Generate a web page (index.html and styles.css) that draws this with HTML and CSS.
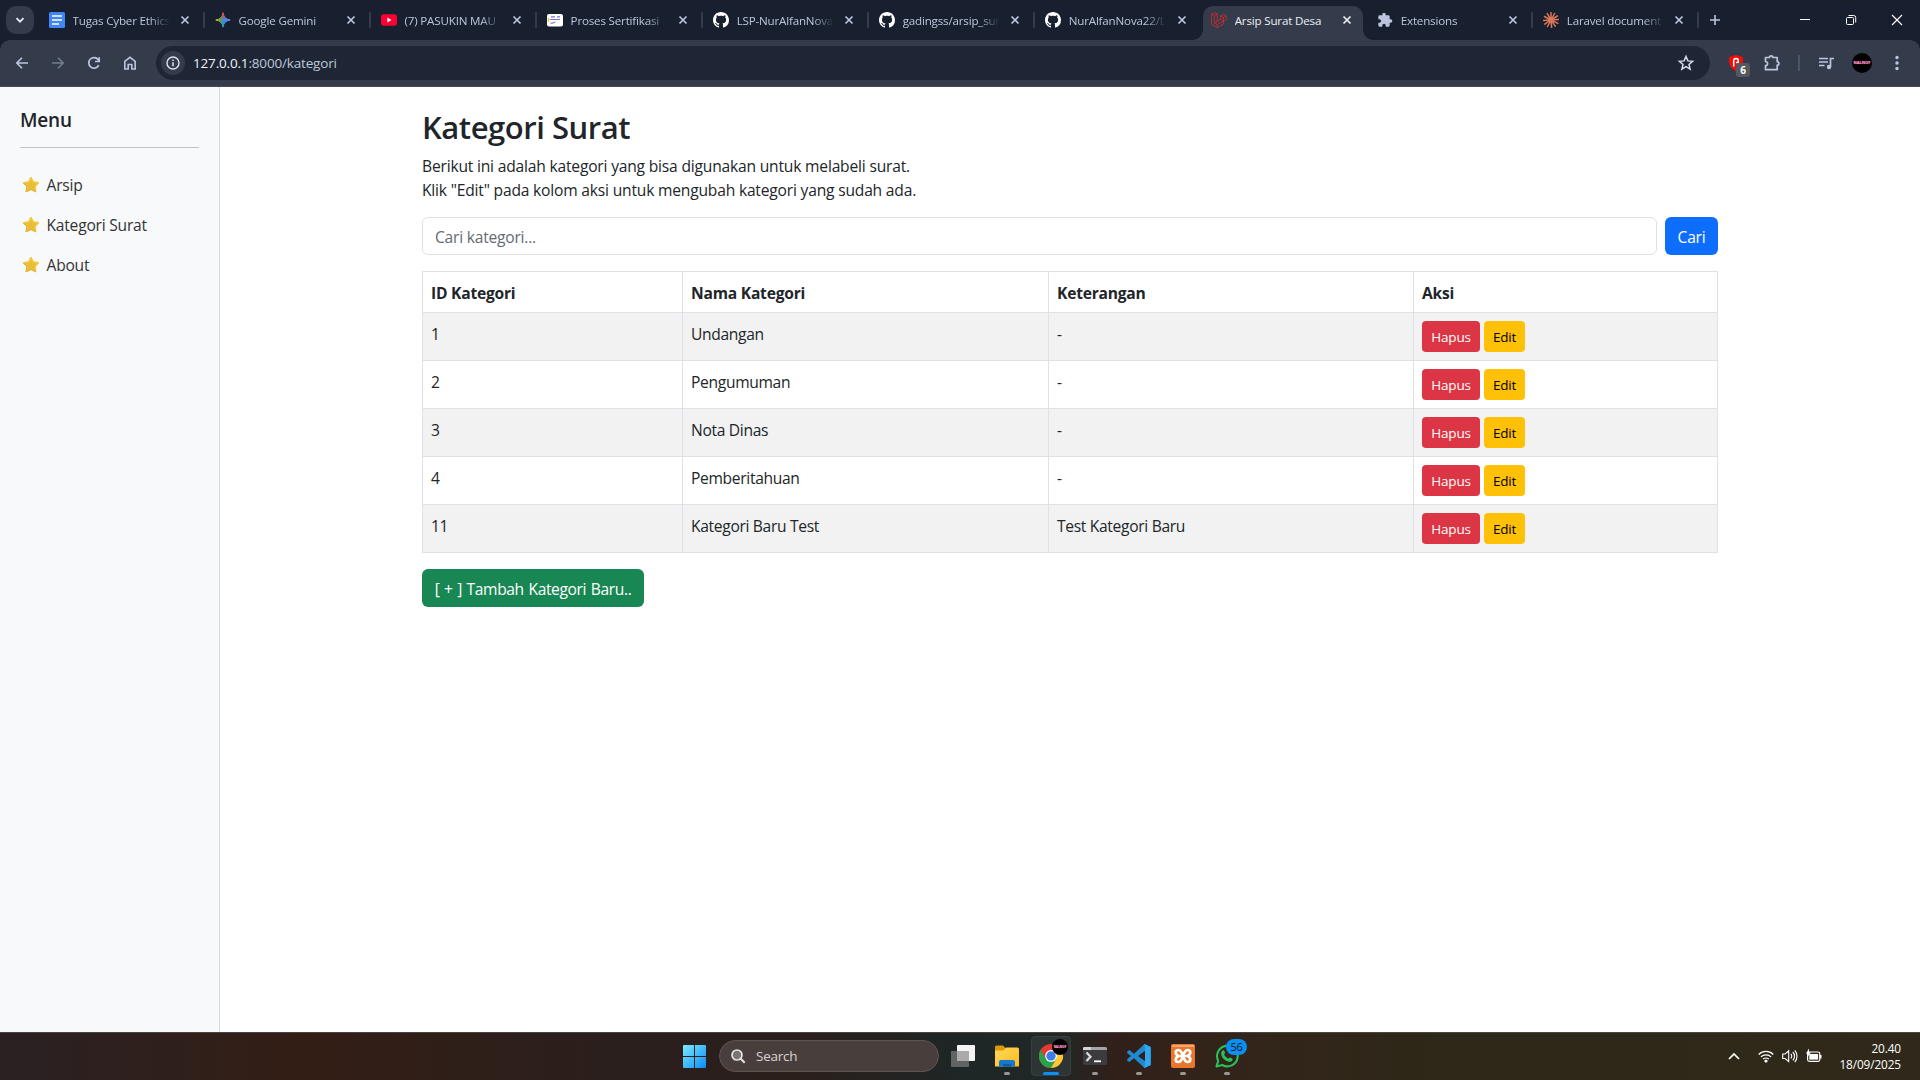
FILE: index.html
```html
<!DOCTYPE html>
<html lang="id">
<head>
<meta charset="utf-8">
<title>Arsip Surat Desa</title>
<link rel="stylesheet" href="styles.css">
</head>
<body>
<svg class="defs" aria-hidden="true">
  <defs>
    <symbol id="x" viewBox="0 0 16 16"><path d="M4.500 4.500l7 7M11.500 4.500l-7 7" fill="none" stroke="currentColor" stroke-width="1.700"/></symbol>
    <symbol id="github" viewBox="0 0 16 16"><path fill="#fff" d="M8 0C3.58 0 0 3.58 0 8c0 3.54 2.29 6.53 5.47 7.59.4.07.55-.17.55-.38 0-.19-.01-.82-.01-1.49-2.01.37-2.53-.49-2.69-.94-.09-.23-.48-.94-.82-1.13-.28-.15-.68-.52-.01-.53.63-.01 1.08.58 1.23.82.72 1.21 1.87.87 2.33.66.07-.52.28-.87.51-1.07-1.78-.2-3.64-.89-3.64-3.95 0-.87.31-1.59.82-2.15-.08-.2-.36-1.02.08-2.12 0 0 .67-.21 2.2.82.64-.18 1.32-.27 2-.27s1.36.09 2 .27c1.53-1.04 2.2-.82 2.2-.82.44 1.1.16 1.92.08 2.12.51.56.82 1.27.82 2.15 0 3.07-1.87 3.75-3.65 3.95.29.25.54.73.54 1.48 0 1.07-.01 1.93-.01 2.2 0 .21.15.46.55.38A8.01 8.01 0 0 0 16 8c0-4.42-3.58-8-8-8z"/></symbol>
    <symbol id="star" viewBox="0 0 18 18"><path d="M9 1.600l2.300 4.500 5 .8-3.500 3.600.8 5L9 13.300l-4.600 2.200.8-5L1.700 6.900l5-.8z" fill="#e9bd35" stroke="#f2c73f" stroke-width="1.600" stroke-linejoin="round"/><path d="M1.500 7l3.300 3.500-.9 5L9 13.300l4.800 2.500" fill="none" stroke="#c98f28" stroke-opacity=".55" stroke-width=".9" stroke-linejoin="round"/></symbol>
    <linearGradient id="win" x1="0" y1="0" x2="1" y2="1"><stop offset="0" stop-color="#7deaff"/><stop offset="1" stop-color="#0a8cf5"/></linearGradient>
    <linearGradient id="gem" x1="0" y1="0" x2="1" y2="0"><stop offset="0" stop-color="#f5b91c"/><stop offset=".32" stop-color="#4aa85a"/><stop offset=".6" stop-color="#3a86ee"/><stop offset="1" stop-color="#6a9cf5"/></linearGradient>
    <linearGradient id="gemtop" x1="0" y1="0" x2="0" y2="1"><stop offset="0" stop-color="#ee4335"/><stop offset=".5" stop-color="#ee4335" stop-opacity="0"/></linearGradient>
    <linearGradient id="fold" x1="0" y1="0" x2="1" y2="1"><stop offset="0" stop-color="#ffd95e"/><stop offset="1" stop-color="#fdbb1e"/></linearGradient>
  </defs>
</svg>

<header class="tabstrip">
  <button class="tab-search"><svg width="12" height="12" viewBox="0 0 12 12"><path d="M2.500 4.200L6 7.700l3.500-3.500" fill="none" stroke="#e3e7f2" stroke-width="1.900"/></svg></button>
  <div class="tab">
    <svg class="fav" viewBox="0 0 16 16"><rect width="16" height="16" rx="1.500" fill="#4285f4"/><path d="M3 4h10M3 8h10M3 12h7" stroke="#fff" stroke-width="1.600"/></svg>
    <span class="label">Tugas Cyber Ethics</span><svg class="close"><use href="#x"/></svg>
  </div>
  <div class="tab">
    <svg class="fav" viewBox="0 0 16 16"><path d="M8 .8C8.600 5 11 7.400 15.200 8 11 8.600 8.600 11 8 15.200 7.400 11 5 8.600.8 8 5 7.400 7.400 5 8 .8z" fill="url(#gem)" stroke="url(#gem)"/><path d="M8 .8C8.600 5 11 7.400 15.200 8 11 8.600 8.600 11 8 15.200 7.400 11 5 8.600.8 8 5 7.400 7.400 5 8 .8z" fill="url(#gemtop)" stroke="url(#gemtop)"/></svg>
    <span class="label">Google Gemini</span><svg class="close"><use href="#x"/></svg>
  </div>
  <div class="tab">
    <svg class="fav" viewBox="0 0 16 16"><rect y="2.300" width="16" height="11.400" rx="3" fill="#ff0033"/><path d="M6.300 5.600v4.800L10.500 8z" fill="#fff"/></svg>
    <span class="label">(7) PASUKIN MAU</span><svg class="close"><use href="#x"/></svg>
  </div>
  <div class="tab">
    <svg class="fav" viewBox="0 0 16 16"><rect y="2" width="16" height="12.500" rx="2" fill="#fff"/><path d="M3 7.500h10M4 4.800h4M10 4.800h3M3.500 11c2 1 3-1 5-1" stroke="#7f7abf" stroke-width="1.200" fill="none"/><path d="M1.500 6v4" stroke="#d8cf45" stroke-width="1.300"/></svg>
    <span class="label">Proses Sertifikasi</span><svg class="close"><use href="#x"/></svg>
  </div>
  <div class="tab"><svg class="fav"><use href="#github"/></svg><span class="label">LSP-NurAlfanNova</span><svg class="close"><use href="#x"/></svg></div>
  <div class="tab"><svg class="fav"><use href="#github"/></svg><span class="label">gadingss/arsip_sur</span><svg class="close"><use href="#x"/></svg></div>
  <div class="tab no-sep"><svg class="fav"><use href="#github"/></svg><span class="label">NurAlfanNova22/L</span><svg class="close"><use href="#x"/></svg></div>
  <div class="tab active">
    <svg class="fav" viewBox="0 0 16 16"><path d="M.6 2L3.400.5l2.800 1.500v7.200l3.400-2V4l2.900-1.600L15.400 4v3.300l-2.900 1.700v3L6.200 15.500.6 12.300zM.6 2l2.800 1.600L6.200 2M3.400 3.600v7.300l2.800 1.600 6.300-3.500M9.600 4l2.900 1.600L15.400 4M12.500 5.600V9L9.600 7.200M6.200 12.500v3M6.200 9.200l-2.800 1.700" fill="none" stroke="#c32d2d" stroke-width=".9" stroke-linejoin="round"/></svg>
    <span class="label">Arsip Surat Desa</span><svg class="close"><use href="#x"/></svg>
  </div>
  <div class="tab">
    <svg class="fav" viewBox="0 0 24 24"><path fill="#bcc5dd" d="M20.500 11H19V7a2 2 0 0 0-2-2h-4V3.500a2.500 2.500 0 0 0-5 0V5H4a2 2 0 0 0-2 2v3.800h1.500a2.700 2.700 0 0 1 0 5.400H2V20a2 2 0 0 0 2 2h3.800v-1.500a2.700 2.700 0 0 1 5.400 0V22H17a2 2 0 0 0 2-2v-4h1.500a2.500 2.500 0 0 0 0-5z"/></svg>
    <span class="label">Extensions</span><svg class="close"><use href="#x"/></svg>
  </div>
  <div class="tab">
    <svg class="fav" viewBox="0 0 16 16"><path d="M8 8V.6M8 8l3.600-6.500M8 8l6.300-4M8 8l7.500-.6M8 8l6.800 3.300M8 8l4.200 6.200M8 8l.6 7.500M8 8l-3.500 6.500M8 8l-6.300 4.200M8 8L.5 8.400M8 8L1.500 4.500M8 8L4.300 1.600" stroke="#d97757" stroke-width="1.500" stroke-linecap="round"/></svg>
    <span class="label">Laravel document</span><svg class="close"><use href="#x"/></svg>
  </div>
  <button class="new-tab"><svg width="12" height="12" viewBox="0 0 12 12"><path d="M6 1v10M1 6h10" stroke="#bcc5dd" stroke-width="1.600"/></svg></button>
  <div class="win-controls">
    <span><svg width="12" height="12" viewBox="0 0 12 12"><path d="M1 5.500h10" stroke="#fff"/></svg></span>
    <span><svg width="12" height="12" viewBox="0 0 12 12"><rect x="1.500" y="3.500" width="7" height="7" rx="1" fill="none" stroke="#fff"/><path d="M3.500 1.500h5.200a2 2 0 0 1 2 2v5" fill="none" stroke="#fff"/></svg></span>
    <span><svg width="12" height="12" viewBox="0 0 12 12"><path d="M1 1l10 10M11 1L1 11" stroke="#fff" stroke-width="1.100"/></svg></span>
  </div>
</header>

<nav class="toolbar">
  <span class="tool"><svg width="16" height="16" viewBox="0 0 16 16"><path d="M14 8H3M8 2.800L2.800 8 8 13.200" fill="none" stroke="#bcc5dd" stroke-width="1.600"/></svg></span>
  <span class="tool"><svg width="16" height="16" viewBox="0 0 16 16"><path d="M2 8h11M8 2.800L13.200 8 8 13.200" fill="none" stroke="#747c8f" stroke-width="1.600"/></svg></span>
  <span class="tool"><svg width="16" height="16" viewBox="0 0 16 16"><path d="M12.800 10.200A5.300 5.300 0 1 1 12.500 5L13 6" fill="none" stroke="#bcc5dd" stroke-width="1.700"/><path d="M13.200 2.200v4.300H9" fill="none" stroke="#bcc5dd" stroke-width="1.700"/></svg></span>
  <span class="tool"><svg width="16" height="16" viewBox="0 0 16 16"><path d="M2.800 14V6.300L8 2.300l5.200 4V14H9.800V9.500H6.200V14z" fill="none" stroke="#bcc5dd" stroke-width="1.600"/></svg></span>
  <div class="omnibox">
    <span class="site-info"><svg width="16" height="16" viewBox="0 0 16 16"><circle cx="8" cy="8" r="6" fill="none" stroke="#dde2f0" stroke-width="1.400"/><path d="M8 7.200v4M8 4.600v1.500" stroke="#dde2f0" stroke-width="1.500"/></svg></span>
    <span class="url"><b>127.0.0.1</b>:8000/kategori</span>
    <svg width="18" height="18" viewBox="0 0 18 18"><path d="M9 2.500l1.900 4.400 4.700.4-3.600 3.100 1.100 4.700L9 12.600l-4.100 2.500L6 10.400 2.400 7.300l4.700-.4z" fill="none" stroke="#d5dbea" stroke-width="1.500"/></svg>
  </div>
  <span class="tool shield"><svg width="16" height="18" viewBox="0 0 16 18"><path d="M8 1l7 2v5c0 4-3 7-7 9-4-2-7-5-7-9V3z" fill="#f20d0d"/><path d="M5.700 12.500V6.800a2.300 2.300 0 0 1 4.600 0v1.700H8" fill="none" stroke="#fff" stroke-width="1.500"/></svg><em>6</em></span>
  <span class="tool"><svg width="18" height="18" viewBox="0 0 18 18"><path d="M2.500 3.500h4a1.700 1.700 0 0 1 3.400 0h4.300v4.200a1.700 1.700 0 0 1 0 3.400v4.600H2.500v-4a2 2 0 0 0 0-4.200z" fill="none" stroke="#bcc5dd" stroke-width="1.700" stroke-linejoin="round"/></svg></span>
  <span class="divider"></span>
  <span class="tool"><svg width="18" height="18" viewBox="0 0 18 18"><path d="M2 4.500h9M2 8h9M2 11.500h5.500M13.500 13V4.500H17" fill="none" stroke="#bcc5dd" stroke-width="1.700"/><circle cx="12" cy="13" r="2.200" fill="#bcc5dd"/></svg></span>
  <span class="tool"><i class="avatar">NALNOF</i></span>
  <span class="tool last"><svg width="4" height="16" viewBox="0 0 4 16"><g fill="#bcc5dd"><circle cx="2" cy="2.500" r="1.700"/><circle cx="2" cy="8" r="1.700"/><circle cx="2" cy="13.500" r="1.700"/></g></svg></span>
</nav>

<div class="page">
  <aside class="sidebar">
    <h5>Menu</h5>
    <hr>
    <a><svg><use href="#star"/></svg>Arsip</a>
    <a><svg><use href="#star"/></svg>Kategori Surat</a>
    <a><svg><use href="#star"/></svg>About</a>
  </aside>
  <main>
    <div class="container">
      <h2>Kategori Surat</h2>
      <p>Berikut ini adalah kategori yang bisa digunakan untuk melabeli surat.<br>Klik "Edit" pada kolom aksi untuk mengubah kategori yang sudah ada.</p>
      <form class="search"><input type="text" placeholder="Cari kategori..."><button type="button" class="btn primary">Cari</button></form>
      <table>
        <colgroup><col class="c-id"><col class="c-name"><col class="c-note"><col></colgroup>
        <thead><tr><th>ID Kategori</th><th>Nama Kategori</th><th>Keterangan</th><th>Aksi</th></tr></thead>
        <tbody>
          <tr><td>1</td><td>Undangan</td><td>-</td><td><div class="actions"><button class="btn sm danger">Hapus</button><button class="btn sm warning">Edit</button></div></td></tr>
          <tr><td>2</td><td>Pengumuman</td><td>-</td><td><div class="actions"><button class="btn sm danger">Hapus</button><button class="btn sm warning">Edit</button></div></td></tr>
          <tr><td>3</td><td>Nota Dinas</td><td>-</td><td><div class="actions"><button class="btn sm danger">Hapus</button><button class="btn sm warning">Edit</button></div></td></tr>
          <tr><td>4</td><td>Pemberitahuan</td><td>-</td><td><div class="actions"><button class="btn sm danger">Hapus</button><button class="btn sm warning">Edit</button></div></td></tr>
          <tr><td>11</td><td>Kategori Baru Test</td><td>Test Kategori Baru</td><td><div class="actions"><button class="btn sm danger">Hapus</button><button class="btn sm warning">Edit</button></div></td></tr>
        </tbody>
      </table>
      <button class="btn success">[ + ] Tambah Kategori Baru..</button>
    </div>
  </main>
</div>

<footer class="taskbar">
  <div class="dock">
    <svg class="start" width="23" height="23" viewBox="0 0 23 23"><path d="M0 1a1 1 0 0 1 1-1h10v11H0zM12 0h10a1 1 0 0 1 1 1v10H12zM0 12h11v11H1a1 1 0 0 1-1-1zM12 12h11v10a1 1 0 0 1-1 1H12z" fill="url(#win)"/></svg>
    <div class="task-search"><svg width="16" height="16" viewBox="0 0 16 16"><circle cx="7" cy="7" r="5" fill="#7a7472" stroke="#e4e2e2" stroke-width="1.700"/><path d="M10.700 10.700l4 4" stroke="#e4e2e2" stroke-width="2"/></svg>Search</div>
    <span class="app"><svg viewBox="0 0 24 24"><rect x="6" y="1" width="18" height="16" rx="1" fill="#f4f4f4"/><rect x="0" y="7" width="18" height="16" rx="1" fill="#6f6f6f" fill-opacity=".85"/><rect x="6" y="7" width="12" height="10" fill="#aaa"/></svg></span>
    <span class="app run"><svg viewBox="0 0 24 24"><path d="M0 3a1.500 1.500 0 0 1 1.500-1.500H8L10.500 4v4H0z" fill="#dc9a0b"/><path d="M0 6.500h8.500L11 3.500h11.500A1.500 1.500 0 0 1 24 5v17.500H0z" fill="url(#fold)"/><path d="M4 22.500V18a2 2 0 0 1 2-2h12a2 2 0 0 1 2 2v4.500z" fill="#1779cc"/><path d="M8 22.500V20h8v2.500z" fill="#0a5cab"/></svg></span>
    <span class="app run current"><svg viewBox="0 0 24 24"><circle cx="12" cy="12" r="12" fill="#e33b2e"/><path d="M1.600 6A12 12 0 0 0 12 24l5.200-9L12 12 6.800 15z" fill="#28a34b"/><path d="M12 24A12 12 0 0 0 22.400 6H12l5.200 9z" fill="#fcc934"/><circle cx="12" cy="12" r="5.900" fill="#fff"/><circle cx="12" cy="12" r="4.700" fill="#3b7ded"/></svg><i class="avatar mini">NALNOF</i></span>
    <span class="app run"><svg viewBox="0 0 24 24"><rect y="3" width="24" height="18" rx="1.500" fill="#3c3c3e"/><path d="M0 6V4.500A1.500 1.500 0 0 1 1.500 3h21A1.500 1.500 0 0 1 24 4.500V6z" fill="#a5a5a5"/><path d="M0 6V4.500A1.500 1.500 0 0 1 1.500 3H8v3z" fill="#d5d5d5"/><path d="M3.500 8.500l4 4.300-4 4.300" fill="none" stroke="#ddd" stroke-width="2.200"/><path d="M11 17.300h7" stroke="#fff" stroke-width="1.800"/></svg></span>
    <span class="app run"><svg viewBox="0 0 24 24"><path d="M17.500 0L7 9.700 2.300 6.100.3 7.200v2L4 12 .3 15v2l2 1L7 14.300 17.500 24l6.200-2.900V2.900zM18 6.700v10.600L11 12z" fill="#2089d0"/><path d="M17.500 0l6.200 2.900v18.200L17.500 24l.5-6.700V6.700z" fill="#30a7f2"/></svg></span>
    <span class="app run"><svg viewBox="0 0 24 24"><rect width="24" height="24" rx="2" fill="#e9762b"/><path d="M1 1h22v2H1z" fill="#f3a777"/><path d="M7.500 12C3.500 10 4 6 7.500 6c3 0 3 3 4.500 6s1.500 6 4.500 6c3.500 0 4-4 0-6 4-2 3.500-6 0-6-3 0-3 3-4.500 6s-1.500 6-4.500 6C4 18 3.500 14 7.500 12zM8.500 12h7" fill="none" stroke="#fff" stroke-width="2.700" stroke-linejoin="round"/></svg></span>
    <span class="app run"><svg viewBox="0 0 24 24"><path d="M1.500 22.500l1.700-5.800A10.300 10.300 0 1 1 7.300 21z" fill="none" stroke="#27c15a" stroke-width="2.100" stroke-linejoin="round"/><path d="M7.500 6.600c.7-.7 1.400-.5 1.700.2l.8 1.900c.2.700-1 1.500-.8 2 .9 1.800 2.200 3 4 3.800.6.200 1.400-1.300 2-1l2 1c.6.3.5 1.200.1 1.900-.8 1.400-2.700 1.700-4.400 1.100-3.300-1.100-5.700-3.500-6.600-6.600-.4-1.700.1-3.300 1.200-4.300z" fill="#27c15a"/></svg><em class="count">56</em></span>
  </div>
  <div class="tray">
    <svg width="12" height="16" viewBox="0 0 12 16"><path d="M1 11l5-5 5 5" fill="none" stroke="#fff" stroke-width="1.700"/></svg>
    <svg class="wifi" width="16" height="16" viewBox="0 0 16 16"><g fill="none" stroke="#fff" stroke-width="1.200"><path d="M.7 6.500a10.300 10.300 0 0 1 14.600 0M2.900 8.900a7.200 7.200 0 0 1 10.200 0M5.100 11.200a4.100 4.100 0 0 1 5.800 0"/></g><circle cx="8" cy="13" r="1.600" fill="#fff"/></svg>
    <svg width="16" height="16" viewBox="0 0 16 16"><path d="M.7 6h2.500L6.700 2.800v10.800L3.200 10.500H.7zM8.800 6a3 3 0 0 1 0 4.400M10.800 4a6 6 0 0 1 0 8.400M12.800 2.300a9 9 0 0 1 0 11.800" fill="none" stroke="#fff" stroke-width="1.100"/></svg>
    <svg width="16" height="16" viewBox="0 0 16 16"><rect x="1.600" y="4" width="12.200" height="9.400" rx="1.800" fill="none" stroke="#fff" stroke-width="1.200"/><rect x="3.300" y="6" width="8.800" height="5.600" fill="#fff"/><path d="M14.500 7v3.500" stroke="#fff" stroke-width="2"/><path d="M3 .5L0 5.500h2L1.500 9 5 4.200H3z" fill="#fff"/></svg>
    <div class="clock">20.40<br>18/09/2025</div>
  </div>
</footer>
</body>
</html>
```
FILE: styles.css
```css
* { box-sizing: border-box; }

body {
  margin: 0;
  width: 1920px;
  height: 1080px;
  overflow: hidden;
  display: flex;
  flex-direction: column;
  font: 15.6px/24px "Open Sans", "Noto Sans", sans-serif;
  letter-spacing: -0.22px;
  color: #212529;
  background: #fff;
}

button, input { font: inherit; letter-spacing: inherit; border: 0; margin: 0; padding: 0; background: none; }
em, i { font-style: normal; }
svg { display: block; flex: none; }
.defs { position: absolute; width: 0; height: 0; }

/* Browser tabs */
.tabstrip {
  height: 40px;
  flex: none;
  display: flex;
  background: #18202f;
  color: #bcc5dd;
}
.tab-search {
  width: 28px;
  height: 28px;
  margin: 6px 6.500px 6px 6px;
  border-radius: 10px;
  background: #343c4c;
  display: flex;
  align-items: center;
  justify-content: center;
}
.tab {
  position: relative;
  width: 166.040px;
  flex: none;
  height: 40px;
  padding: 0 2px 0 8px;
  display: flex;
  align-items: center;
  font-size: 11.600px;
  line-height: 16px;
  letter-spacing: -0.18px;
}
.tab::after {
  content: "";
  width: 2px;
  height: 16px;
  margin-left: 10px;
  border-radius: 1px;
  background: #343c4c;
}
.tab.no-sep::after, .tab.active::after { display: none; }
.fav { width: 16px; height: 16px; margin-right: 8px; }
.label {
  width: 97px;
  margin-right: 8px;
  padding-top: 1px;
  overflow: hidden;
  white-space: nowrap;
  -webkit-mask-image: linear-gradient(90deg, #000 76px, transparent 97px);
  mask-image: linear-gradient(90deg, #000 76px, transparent 97px);
}
.close { width: 16px; height: 16px; }
.tab.active {
  width: 160px;
  height: 34px;
  margin: 6px 6.040px 0 0;
  padding-bottom: 6px;
  border-radius: 10px 10px 0 0;
  background: #343c4c;
  color: #eceef5;
}
.tab.active::before {
  content: "";
  position: absolute;
  left: -10px;
  right: -10px;
  bottom: 0;
  height: 10px;
  background:
    radial-gradient(circle at 0 0, transparent 9.500px, #343c4c 10px) left / 10px 10px no-repeat,
    radial-gradient(circle at 100% 0, transparent 9.500px, #343c4c 10px) right / 10px 10px no-repeat;
}
.tab.active .label {
  margin-right: 7px;
  -webkit-mask-image: none;
  mask-image: none;
}
.new-tab { width: 28px; display: flex; align-items: center; justify-content: center; }
.win-controls { margin-left: auto; display: flex; }
.win-controls span { width: 46px; display: flex; align-items: center; justify-content: center; }

/* Browser toolbar */
.toolbar {
  height: 47px;
  flex: none;
  display: flex;
  align-items: center;
  padding: 0 6px 1px 4px;
  border-bottom: 1px solid #4a4b52;
  background:
    radial-gradient(circle at 10px 10px, #343c4c 9.500px, #18202f 10px) left top / 10px 10px no-repeat,
    radial-gradient(circle at 0 10px, #343c4c 9.500px, #18202f 10px) right top / 10px 10px no-repeat,
    #343c4c;
}
.tool {
  position: relative;
  width: 36px;
  height: 36px;
  flex: none;
  display: flex;
  align-items: center;
  justify-content: center;
}
.tool.last { width: 34px; }
.omnibox {
  flex: 1;
  height: 34px;
  margin: 0 8px;
  padding: 0 15px 0 5px;
  display: flex;
  align-items: center;
  border-radius: 17px;
  background: #1e2636;
}
.site-info {
  width: 24px;
  height: 24px;
  margin-right: 8px;
  border-radius: 50%;
  background: #343c4c;
  display: flex;
  align-items: center;
  justify-content: center;
}
.url { flex: 1; font-size: 13.500px; letter-spacing: -0.17px; color: #bfc6d6; }
.url b { font-weight: 400; color: #f1f3f9; }
.shield em {
  position: absolute;
  left: 18px;
  top: 18px;
  width: 14px;
  height: 14px;
  border-radius: 3px;
  background: #55585c;
  color: #fff;
  font: 700 10px/14px "Open Sans", sans-serif;
  text-align: center;
}
.divider { width: 2px; height: 16px; margin: 0 8px; background: #4c5566; }
.avatar {
  width: 20px;
  height: 20px;
  border-radius: 50%;
  background: #000;
  color: #f7a6cc;
  font: 700 4px/20px "Open Sans", sans-serif;
  letter-spacing: 0;
  text-align: center;
  overflow: hidden;
  text-shadow: 0 0 1px #e0338a;
}

/* Page */
.page { height: 945px; flex: none; display: flex; }
.sidebar {
  width: 220px;
  padding: 20px;
  border-right: 1px solid #d5d8dc;
  background: #f8f9fa;
}
.sidebar h5 { margin: 0; padding-top: 3px; font-size: 19px; line-height: 21px; font-weight: 600; letter-spacing: -0.2px; }
.sidebar hr { margin: 16px 0; border: 0; border-top: 1px solid #bfc1c4; }
.sidebar a {
  display: flex;
  align-items: center;
  gap: 6.500px;
  padding: 9px 2px 7px;
  color: #333;
}
.sidebar a svg { width: 18px; height: 18px; margin-bottom: 1px; }
main { flex: 1; }
.container { width: 1320px; margin: 0 auto; padding: 20px 12px; }
h2 { margin: 0 0 7px; padding-top: 2px; font-size: 31px; line-height: 37.400px; font-weight: 600; letter-spacing: -0.45px; }
p { margin: 0 0 15px; padding-top: 1px; letter-spacing: -0.19px; }
.search { display: flex; gap: 8px; margin-bottom: 16px; }
.search input {
  flex: 1;
  height: 38px;
  padding: 1px 12px 0;
  border: 1px solid #dee2e6;
  border-radius: 6px;
}
.search input::placeholder { color: #646a70; opacity: 1; }
.btn {
  height: 38px;
  padding: 1px 0 0;
  border-radius: 6px;
  color: #fff;
  white-space: nowrap;
}
.btn.sm { height: 31px; padding: 0; font-size: 13.500px; border-radius: 4px; }
.primary { width: 53px; background: #0d6efd; }
.danger { width: 58px; background: #dc3545; }
.warning { width: 41px; background: #ffc107; color: #000; }
.success { width: 222px; background: #198754; letter-spacing: -0.38px; word-spacing: 1px; }
table {
  width: 100%;
  margin-bottom: 16px;
  border-collapse: collapse;
  table-layout: fixed;
}
.c-id { width: 260px; }
.c-name { width: 366px; }
.c-note { width: 365px; }
th, td {
  padding: 9px 8px 7px;
  border: 1px solid #dee2e6;
  text-align: left;
  vertical-align: top;
}
td { letter-spacing: -0.32px; }
tbody tr:nth-child(odd) { background: #f2f2f2; }
.actions { display: flex; gap: 4px; margin: -1px 0 1px; letter-spacing: -0.22px; }

/* Taskbar */
.taskbar {
  height: 48px;
  flex: none;
  display: flex;
  justify-content: space-between;
  padding-bottom: 1px;
  border-top: 1px solid #4b4541;
  background: linear-gradient(90deg, #2a2123 0, #331e15 300px, #2a1f1d 640px, #2b1f1b 800px, #1e2626 960px, #1f2727 1040px, #31201a 1120px, #33241a 1220px, #2d2818 1450px, #30291b 1920px);
  color: #fff;
}
.dock { display: flex; align-items: center; padding-left: 683px; }
.task-search {
  width: 220px;
  height: 32px;
  margin: 0 2px 0 13px;
  padding-left: 10px;
  display: flex;
  align-items: center;
  gap: 10px;
  border: 1px solid #5d5350;
  border-radius: 16px;
  background: #483e3b;
  color: #d8d4d3;
  font-size: 13.500px;
}
.app {
  position: relative;
  width: 40px;
  height: 40px;
  margin: 0 2px;
  display: flex;
  align-items: center;
  justify-content: center;
  border-radius: 4px;
}
.app svg { width: 24px; height: 24px; }
.app.run::after {
  content: "";
  position: absolute;
  left: 17px;
  bottom: 1px;
  width: 6px;
  height: 3px;
  border-radius: 2px;
  background: #9b9895;
}
.app.current { background: #2d3434; border: 1px solid #383f3f; }
.app.current::after { left: 11px; bottom: 0; width: 16px; background: #0a90f5; }
.mini { position: absolute; left: 20px; top: 2px; width: 16px; height: 16px; font-size: 3px; line-height: 16px; }
.count {
  position: absolute;
  left: 19px;
  top: 3px;
  width: 21px;
  height: 16px;
  border-radius: 8px;
  background: #0a90f5;
  color: #111;
  font-size: 11px;
  line-height: 16px;
  text-align: center;
}
.tray { display: flex; align-items: center; gap: 8px; padding-right: 19px; }
.wifi { margin-left: 10px; }
.clock { width: 71px; text-align: right; font-size: 11.800px; line-height: 16px; letter-spacing: -0.1px; }
```
